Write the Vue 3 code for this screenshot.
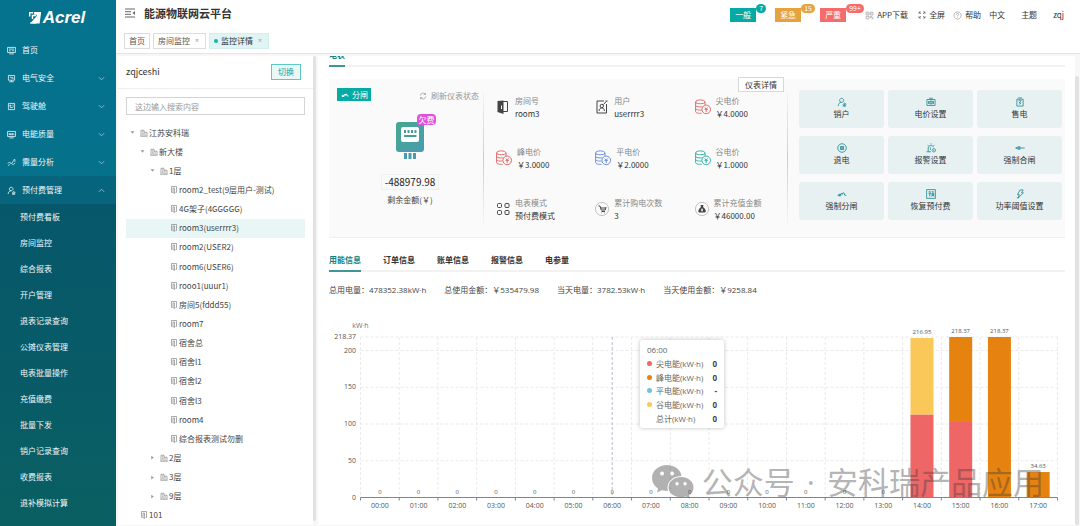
<script setup>
const icons = {
  monitor: 'M1 2.500h14v9H1zM4 14h8M3.500 5.500h9M3.500 8.500h3M9 8.500h3.500',
  plug: 'M2.500 2.500h11v8.500h-11zM8 11v2.500M4 13.800h8M5 5.500h2.500v2.500M10 5v3h1.500',
  gauge: 'M2.500 2.500h11v11h-11zM5 5.500h2v2H5zM5 10.500l2-1 2 1 2.500-3M9.500 5.500h2',
  quality: 'M1 2.500h14v9H1zM4 14h8M4 9V6l2 3V6M8.500 6h1v3h-1zM12 6v3',
  trend: 'M1.500 10l3-3 3 3.500 4-5M2 13.500l3-2M9 10.500l2 1.500 3.500-3.500M10.500 4.500l3.500-2v4',
  user: 'M7.500 8.500a3.200 3.200 0 1 0-.1 0M2 14.500c0-3.500 2-6 5-6M12 10a2 2 0 1 0 .1 0M10.500 13.500l3-3M9 14.500h5.500',
  building: 'M2 14.500V2.500h6v12M8 6.500h6v8M1 14.500h14M4 5.500h2M4 8.500h2M4 11.500h2M10.500 9.500h1.500M10.500 12h1.500',
  door: 'M5 13H3V1h10v12h-2M6 4h3v11l-3-2z',
  qr: 'M2 2h5v5H2zM9.500 2h4.500v5H9.500zM2 9.500h5v4.500H2zM9.500 9.500h2v2h-2zM12 14h2v-4M4 4.500h1M11.500 4.500h1',
  expand: 'M2 6V2h4M14 6V2h-4M2 10v4h4M14 10v4h-4M2 2l4 4M14 2l-4 4M2 14l4-4M14 14l-4-4',
  help: 'M8 1.500a6.500 6.500 0 1 0 .1 0M6 6.500c0-3 4-3 4-.5 0 1.500-2 1.500-2 3.500M8 11v1.200',
  price: 'M1.500 4h13v9.500h-13zM5 2h6M6 6.500h4v4.500H6zM8 6.500v4.500M4 6.500v4.500M12 6.500v4.500',
  sell: 'M3 3.500h10v11H3zM5 1.500h6M5.500 6h5M9 7l-2.500 2.500h3L7.500 12',
  refund: 'M8 1.200a6.800 6.800 0 1 0 .1 0M5.500 5.500h5v5h-5zM7 7h2v2H7z',
  alarm: 'M1 14h7M3.500 14V8c0-5 8-5 8.500-1M8 .5v2M2.500 3l1.500 1.500M13.500 3L12 4.500M7 7v4M12.500 9a2.700 2.700 0 1 0 .1 0M12.500 10.500v2',
  on: 'M.5 8h15M4 6l-2 2 2 2M5 6h3v4H5z',
  off: 'M1 10h4M5 10l2-3 2 2M7 8l4-2 1.500 4H15M3 8.500h3V11H3z',
  prepaid: 'M1 1h14v14H1zM4 4.500h3.500L5.500 6.500M4 7.500h4M6 7.500V12M9 4.500h3.500M9.500 6.500h3v4h-3zM9.500 8.500h3M10 10.500L8.500 12M12 10.500l1 1.500',
  bolt: 'M8 1.500h5L10.500 6h3L5 14.500 7 9H4zM6.500 14H3',
}

const menu = [
  { label: '首页', icon: 'monitor' },
  { label: '电气安全', icon: 'plug', sub: true },
  { label: '驾驶舱', icon: 'gauge', sub: true },
  { label: '电能质量', icon: 'quality', sub: true },
  { label: '需量分析', icon: 'trend', sub: true },
  { label: '预付费管理', icon: 'user', sub: true, open: true },
]
const submenu = ['预付费看板', '房间监控', '综合报表', '开户管理', '退表记录查询', '公摊仪表管理', '电表批量操作', '充值缴费', '批量下发', '销户记录查询', '收费报表', '退补模拟计算']

const alerts = [
  { label: '一般', count: '7', kind: 'normal' },
  { label: '紧急', count: '15', kind: 'urgent' },
  { label: '严重', count: '99+', kind: 'severe' },
]

const room = (label) => ({ label, level: 'l3', icon: 'door' })
const tree = [
  { label: '江苏安科瑞', level: 'l0', icon: 'building', arrow: 'open' },
  { label: '新大楼', level: 'l1', icon: 'building', arrow: 'open' },
  { label: '1层', level: 'l2', icon: 'building', arrow: 'open' },
  room('room2_test(9层用户-测试)'),
  room('4G架子(4GGGGG)'),
  { ...room('room3(userrrr3)'), active: true },
  room('room2(USER2)'),
  room('room6(USER6)'),
  room('rooo1(uuur1)'),
  room('房间5(fddd55)'),
  room('room7'),
  room('宿舍总'),
  room('宿舍l1'),
  room('宿舍l2'),
  room('宿舍l3'),
  room('room4'),
  room('综合报表测试勿删'),
  { label: '2层', level: 'l2', icon: 'building', arrow: 'closed' },
  { label: '3层', level: 'l2', icon: 'building', arrow: 'closed' },
  { label: '9层', level: 'l2', icon: 'building', arrow: 'closed' },
  { label: '101', level: 'l0', icon: 'door' },
]

const infos = [
  { label: '房间号', value: 'room3', kind: 'room' },
  { label: '用户', value: 'userrrr3', kind: 'person' },
  { label: '尖电价', value: '￥4.0000', kind: 'coin', tone: 'red' },
  { label: '峰电价', value: '￥3.0000', kind: 'coin', tone: 'red' },
  { label: '平电价', value: '￥2.0000', kind: 'coin', tone: 'blue' },
  { label: '谷电价', value: '￥1.0000', kind: 'coin', tone: 'teal' },
  { label: '电表模式', value: '预付费模式', kind: 'mode' },
  { label: '累计购电次数', value: '3', kind: 'cart' },
  { label: '累计充值金额', value: '￥46000.00', kind: 'bag' },
]

const actions = [
  ['销户', 'user'], ['电价设置', 'price'], ['售电', 'sell'],
  ['退电', 'refund'], ['报警设置', 'alarm'], ['强制合闸', 'on'],
  ['强制分闸', 'off'], ['恢复预付费', 'prepaid'], ['功率阈值设置', 'bolt'],
]

const tabs = ['用能信息', '订单信息', '账单信息', '报警信息', '电参量']
const stats = [
  ['总用电量：', '478352.38kW·h'],
  ['总使用金额：', '￥535479.98'],
  ['当天电量：', '3782.53kW·h'],
  ['当天使用金额：', '￥9258.84'],
]

const plot = { left: 31.5, right: 728.5, top: 39, bottom: 199.5 }
const maxValue = 218.37
const step = (plot.right - plot.left) / 18
const yOf = (v) => plot.bottom - (v / maxValue) * (plot.bottom - plot.top)
const ticks = [0, 50, 100, 150, 200, maxValue]
const hours = Array.from({ length: 18 }, (_, i) => ({
  label: String(i).padStart(2, '0') + ':00',
  x: plot.left + step * (i + 0.5),
  edge: plot.left + step * i,
  parts: [],
  total: 0,
}))
const fill = (i, parts) => {
  let base = 0
  hours[i].parts = parts.map(([value, color]) => {
    const part = { y: yOf(base + value), h: yOf(base) - yOf(base + value), color }
    base += value
    return part
  })
  hours[i].total = Number(base.toFixed(2))
}
fill(14, [[113, '#ee6666'], [103.95, '#fac858']])
fill(15, [[104, '#ee6666'], [114.37, '#e68310']])
fill(16, [[218.37, '#e68310']])
fill(17, [[34.63, '#e68310']])

const tooltip = [
  ['尖电能(kW·h)', '0', 'red'],
  ['峰电能(kW·h)', '0', 'orange'],
  ['平电能(kW·h)', '-', 'blue'],
  ['谷电能(kW·h)', '0', 'yellow'],
  ['总计(kW·h)', '0', 'none'],
]
</script>

<template>
  <div class="app">
    <aside class="side">
      <div class="logo">
        <svg viewBox="0 0 26 26" class="logo-mark"><path d="M0 0h9v3H3v7H0zM11 0h15v3H11zM26 3l-3 22H3v-3h11l3-16h-6V3z" /><path d="M6 6h9v3H9v6H6zM2 25L14 12l5-5-3 18z" /></svg>
        <strong>Acrel</strong>
      </div>
      <nav>
        <a v-for="m in menu" :key="m.label" href="#" class="menu" :class="{ open: m.open }">
          <svg viewBox="0 0 16 16" class="ico"><path :d="icons[m.icon]" /></svg>
          <span>{{ m.label }}</span>
          <svg v-if="m.sub" viewBox="0 0 8 8" class="chev"><path :d="m.open ? 'M1 5.500l3-3 3 3' : 'M1 2.500l3 3 3-3'" /></svg>
        </a>
        <div class="submenu">
          <a v-for="s in submenu" :key="s" href="#">{{ s }}</a>
        </div>
      </nav>
    </aside>

    <div class="page">
      <header class="head">
        <div class="head-top">
          <button class="fold" aria-label="收起菜单">
            <svg viewBox="0 0 12 12"><path d="M1 2h10M1 4.700h6M1 7.300h6M1 10h10" /><path class="solid" d="M11 4v4L8.500 6z" /></svg>
          </button>
          <h1>能源物联网云平台</h1>
          <div class="tools">
            <button v-for="a in alerts" :key="a.label" class="alert" :class="a.kind">{{ a.label }}<i>{{ a.count }}</i></button>
            <a href="#" class="t-app"><svg viewBox="0 0 16 16" class="ico"><path :d="icons.qr" /></svg>APP下载</a>
            <a href="#" class="t-full"><svg viewBox="0 0 16 16" class="ico dark"><path :d="icons.expand" /></svg>全屏</a>
            <a href="#" class="t-help"><svg viewBox="0 0 16 16" class="ico"><path :d="icons.help" /></svg>帮助</a>
            <a href="#" class="t-lang">中文</a>
            <a href="#" class="t-theme">主题</a>
            <a href="#">zqj</a>
          </div>
        </div>
        <div class="crumbs">
          <a href="#">首页</a>
          <a href="#">房间监控<span class="x">×</span></a>
          <a href="#" class="on"><i></i>监控详情<span class="x">×</span></a>
        </div>
      </header>

      <div class="body">
        <section class="tree-panel">
          <div class="tree-head"><span>zqjceshi</span><button>切换</button></div>
          <input type="text" placeholder="这边输入搜索内容" aria-label="这边输入搜索内容">
          <ul class="tree">
            <li v-for="n in tree" :key="n.label" :class="[n.level, { active: n.active }]">
              <svg viewBox="0 0 8 8" class="tri"><path v-if="n.arrow" :d="n.arrow === 'open' ? 'M1 2h6L4 6z' : 'M2 1v6L6 4z'" /></svg>
              <svg viewBox="0 0 16 16" class="ico"><path :d="icons[n.icon]" /></svg>
              <span>{{ n.label }}</span>
            </li>
          </ul>
        </section>
        <div class="bar tree-bar"></div>

        <main class="main">
          <div class="strip clipped"><button class="on">电表</button></div>

          <section class="card">
            <button class="detail">仪表详情</button>
            <div class="meter">
              <div class="meter-top">
                <span class="tag"><svg viewBox="0 0 16 16" class="ico"><path :d="icons.off" /></svg>分闸</span>
                <button class="refresh"><svg viewBox="0 0 16 16" class="ico"><path d="M2.500 7a5.500 5.500 0 0 1 10-2.500M13.500 9a5.500 5.500 0 0 1-10 2.500M13 1.500v3.500H9.500M3 14.500V11h3.500" /></svg>刷新仪表状态</button>
              </div>
              <div class="device">
                <svg viewBox="0 0 28 38">
                  <defs><linearGradient id="mg" x1="0" y1="0" x2="1" y2="1"><stop offset="0" stop-color="#45a88f" /><stop offset="1" stop-color="#4a9bb0" /></linearGradient></defs>
                  <rect x="0" y="1" width="28" height="30" rx="3" fill="url(#mg)" />
                  <rect x="5" y="6" width="18" height="15" rx="2" fill="#fff" />
                  <path d="M8 9h2v3H8zM11.500 9h2v3h-2zM15 9h2v3h-2zM18.500 9h2v3h-2zM8 14h12.500v2H8z" fill="#45a08f" />
                  <path d="M8 32h3v6H8zM12.500 32h3v6h-3zM17 32h3v6h-3z" fill="#4a9bab" />
                </svg>
                <span class="owe">欠费</span>
              </div>
              <div class="money">-488979.98</div>
              <div class="money-label">剩余金额(￥)</div>
            </div>

            <div class="infos">
              <div v-for="f in infos" :key="f.label" class="info" :class="f.kind">
                <svg viewBox="0 0 16 16" class="pic" :class="f.tone">
                  <template v-if="f.kind === 'coin'">
                    <path d="M.6 3c0-2.800 9.400-2.800 9.400 0v3M.6 3c0 2.300 9.400 2.300 9.400 0M.6 3v9.500c0 1.500 3 2 6 1.800M.6 6.200c0 1.600 4 2 7 1.500M.6 9.400c0 1.300 3 1.900 6 1.600" />
                    <circle cx="11.200" cy="10.400" r="4.300" /><path d="M9.800 8.500l1.400 1.700 1.400-1.700M9.600 10.400h3.200M11.200 10.200v3" />
                  </template>
                  <template v-else-if="f.kind === 'room'">
                    <path d="M6 2.500h5.500v10H7" /><path class="solid" d="M1.500 2l6-.5v13.500l-6-2z" /><path class="cut" d="M5.500 6.500v3.500" />
                  </template>
                  <template v-else-if="f.kind === 'person'">
                    <path d="M2 2h7M11.500 5v9H2V2M8.500 5.500l3.500-4M11 1.500l1 1" /><circle cx="6.800" cy="7" r="1.700" /><path d="M4 12c0-4 5.500-4 5.500 0" />
                  </template>
                  <template v-else-if="f.kind === 'mode'">
                    <rect x="1.500" y="2.500" width="4" height="4" rx="1" /><rect x="9" y="2.500" width="4" height="4" rx="1" />
                    <rect x="1.500" y="9.500" width="4" height="4" rx="1" /><rect x="9" y="9.500" width="4" height="4" rx="1" />
                  </template>
                  <template v-else>
                    <circle class="ring" cx="7" cy="8" r="6.600" />
                    <path v-if="f.kind === 'cart'" d="M3.500 5H5l1.200 4h4L11 6M6.500 10.500h3.500M6.500 12h.5M9.500 12h.5M6 7h4.500" />
                    <path v-else class="solid" d="M5.500 4h3L8 6c4 3 3 5.500 1.500 5.500h-5C3 11.500 2.500 9 6 6z" />
                    <path v-if="f.kind === 'bag'" class="cut" d="M7 7.500v3M6 9h2" />
                  </template>
                </svg>
                <div><span>{{ f.label }}</span><b>{{ f.value }}</b></div>
              </div>
            </div>

            <div class="actions">
              <button v-for="a in actions" :key="a[0]"><svg viewBox="0 0 16 16" class="ico"><path :d="icons[a[1]]" /></svg>{{ a[0] }}</button>
            </div>
          </section>

          <div class="strip tabs"><button v-for="(t, i) in tabs" :key="t" :class="{ on: i === 0 }">{{ t }}</button></div>
          <div class="stats"><span v-for="s in stats" :key="s[0]">{{ s[0] }}<b>{{ s[1] }}</b></span></div>

          <div class="chart">
            <svg viewBox="0 0 736 222">
              <g class="grid">
                <line v-for="t in ticks.slice(1)" :key="t" :x1="plot.left" :x2="plot.right" :y1="yOf(t)" :y2="yOf(t)" />
                <line v-for="h in hours" :key="h.label" :x1="h.edge" :x2="h.edge" :y1="plot.top" :y2="plot.bottom" />
                <line :x1="plot.right" :x2="plot.right" :y1="plot.top" :y2="plot.bottom" />
              </g>
              <line class="pointer" :x1="hours[6].x" :x2="hours[6].x" :y1="plot.top" :y2="plot.bottom" />
              <text class="unit" :x="plot.left" y="30">kW·h</text>
              <text v-for="t in ticks" :key="t" class="tick" x="27" :y="yOf(t) + 2">{{ t }}</text>
              <g v-for="h in hours" :key="h.label">
                <rect v-for="p in h.parts" :key="p.y" :x="h.x - 11.500" :y="p.y" width="23" :height="p.h" :fill="p.color" />
                <text class="val" :x="h.x" :y="yOf(h.total) - 4">{{ h.total }}</text>
                <text class="hour" :x="h.x" y="210">{{ h.label }}</text>
                <line class="axis" :x1="h.edge" :x2="h.edge" :y1="plot.bottom" :y2="plot.bottom + 3" />
              </g>
              <line class="axis" :x1="plot.right" :x2="plot.right" :y1="plot.bottom" :y2="plot.bottom + 3" />
              <line class="axis" :x1="plot.left" :x2="plot.right" :y1="plot.bottom" :y2="plot.bottom" />
            </svg>

            <div class="tip">
              <p>06:00</p>
              <div v-for="r in tooltip" :key="r[0]"><i :class="r[2]"></i><span>{{ r[0] }}</span><b>{{ r[1] }}</b></div>
            </div>

            <div class="mark">
              <svg viewBox="0 0 42 34">
                <path fill-rule="evenodd" d="M15 0c8 0 14 5 14.500 11C21 11 15 16.500 15.500 23.500c.1 1 .2 1.800.5 2.500-2 0-4-.2-6-.8L5 27.500l1-4C2.500 21 0 17.500 0 13 0 5.500 7 0 15 0zM10 6.500a2 2 0 1 0 .1 0zM20 6.500a2 2 0 1 0 .1 0z" />
                <path fill-rule="evenodd" d="M29 12c7 0 12.500 4.500 12.500 10.500 0 3.500-2 6-4.500 8l1 3-4-2c-1.500.5-3 .8-5 .8-7 0-12.500-4.300-12.500-10C16.500 16.500 22 12 29 12zM25 17a1.700 1.700 0 1 0 .1 0zM33 17a1.700 1.700 0 1 0 .1 0z" />
              </svg>
              <span>公众号</span><span>·</span><span>安科瑞产品应用</span>
            </div>
          </div>
        </main>
        <div class="bar main-bar"></div>
      </div>
    </div>
  </div>
</template>

<style>
html, body, #app { height: 100%; }
body { margin: 0; }
</style>

<style scoped>
* { box-sizing: border-box; }
.app {
  display: flex;
  height: 100%;
  min-height: 526px;
  font: 8px/16px "Noto Sans CJK SC", sans-serif;
  color: #444;
  background: #fff;
  overflow: hidden;
}
button { font: inherit; color: inherit; background: none; border: 0; padding: 0; margin: 0; cursor: pointer; }
a { color: inherit; text-decoration: none; }
i { font-style: normal; }
svg { display: block; }
.ico { width: 9px; height: 9px; flex: none; fill: none; stroke: currentColor; stroke-width: 1.4; }

.side { width: 116px; flex: none; color: #f0f8fa; background: linear-gradient(#05738f 0, #05718b 176px, #0a5f62 100%); }
.logo { height: 36px; display: flex; align-items: center; justify-content: center; gap: 1px; padding-right: 2px; }
.logo strong { font: italic 900 17px/34px "Liberation Sans", Arial, sans-serif; color: #fff; }
.logo-mark { width: 12px; height: 12px; fill: #fff; margin-right: 1px; }
.menu { display: flex; align-items: center; height: 28px; padding: 0 11px 0 7px; }
.menu span { margin-left: 6px; flex: 1; }
.menu .chev { width: 7px; height: 7px; fill: none; stroke: #9cc6d0; }
.menu.open { background: #06657d; }
.submenu { background: linear-gradient(#06576b, #0a5f62); padding-bottom: 10px; }
.submenu a { display: block; height: 26px; line-height: 26px; padding-left: 20px; }

.page { flex: 1; min-width: 0; display: flex; flex-direction: column; }
.head { height: 54px; border-bottom: 1px solid #e4e4e4; flex: none; }
.head-top { height: 33px; display: flex; align-items: flex-start; padding: 5px 16px 0 8px; }
.fold { margin: 2px 0 0; }
.fold svg { width: 12px; height: 12px; fill: none; stroke: #666; stroke-width: 1; }
.fold .solid { fill: #666; stroke: none; }
h1 { margin: 0 auto 0 8px; font-size: 11px; line-height: 16px; font-weight: 600; color: #333; }
.tools { display: flex; align-items: center; padding-top: 3px; line-height: 14px; color: #333; }
.tools a { display: flex; align-items: center; gap: 3px; }
.tools .ico { stroke: #888; stroke-width: 1; }
.tools .ico.dark { stroke: #333; width: 8px; height: 8px; }
.alert { position: relative; width: 26px; height: 14px; color: #fff; margin-right: 19px; }
.alert i { position: absolute; left: 26px; top: -4px; height: 9px; min-width: 10px; padding: 0 3px; border-radius: 5px; font-size: 7px; line-height: 9px; background: inherit; }
.normal { background: #05aaa4; }
.urgent { background: #e6a23c; }
.severe { background: #f56c6c; }
.t-app { margin-right: 10px; }
.t-full, .t-help { margin-right: 8px; }
.t-lang, .t-theme { margin-right: 16px; }
.crumbs { display: flex; gap: 3px; padding-left: 8px; }
.crumbs a { display: flex; align-items: center; height: 16px; padding: 0 4px; border: 1px solid #dcdcdc; color: #555; }
.crumbs .on { background: #e0f5f3; border-color: #d5efed; color: #333; }
.crumbs .on i { width: 4px; height: 4px; border-radius: 50%; background: #13b5ac; margin-right: 3px; }
.crumbs .x { color: #999; margin: 0 2px 0 5px; font-family: "Open Sans", sans-serif; font-size: 7px; }

.body { flex: 1; min-height: 0; display: flex; padding: 2px 0 1px 2px; background: #f7f7f7; }
.tree-panel { width: 195px; flex: none; background: #fff; display: flex; flex-direction: column; }
.tree-head { display: flex; align-items: center; justify-content: space-between; height: 33px; padding: 0 12px 0 8px; border-bottom: 1px solid #eee; flex: none; }
.tree-head span { font-size: 9px; color: #333; }
.tree-head button { width: 30px; height: 16px; line-height: 14px; border: 1px solid #5cc9c4; background: #e9f7f6; color: #0fa59f; }
.tree-panel input { margin: 8px 8px 0; height: 18px; padding: 0 8px; border: 1px solid #d4d4d4; font: inherit; outline: none; min-width: 0; flex: none; }
.tree-panel input::placeholder { color: #999; opacity: 1; }
.tree { list-style: none; margin: 8px 8px 0; padding: 0; flex: 1; display: flex; flex-direction: column; }
.tree li { flex: 1; display: flex; align-items: center; white-space: nowrap; }
.tree .tri { width: 5px; height: 5px; fill: #999; margin-right: 5px; flex: none; }
.tree .ico { width: 8px; height: 8px; stroke: #888; margin-right: 1px; }
.tree .l0 { padding-left: 4px; }
.tree .l1 { padding-left: 14px; }
.tree .l2 { padding-left: 24px; }
.tree .l3 { padding-left: 34px; }
.tree .active { background: #e8f6f6; }
.bar { flex: none; background: #e2e2e2; border-radius: 2px; }
.tree-bar { width: 3px; margin-bottom: 4px; }
.main-bar { width: 4px; margin: 20px 1px 0 0; }

.main { flex: 1; min-width: 0; background: #fff; margin-left: 2px; padding: 0 10px 0 11px; }
.strip { display: flex; align-items: flex-end; border-bottom: 2px solid #f2f2f2; }
.strip button { padding-bottom: 2px; border-bottom: 2px solid transparent; margin-bottom: -2px; font-weight: 600; color: #333; line-height: 16px; flex: none; }
.strip .on { color: #16807f; border-color: #3f9694; }
.clipped { height: 11px; overflow: clip; overflow-clip-margin: border-box; }
.tabs { height: 24px; gap: 22px; margin-top: 10px; }

.card { position: relative; display: grid; grid-template-columns: 155fr 304fr 274fr; height: 159px; margin-top: 12px; padding-right: 3px; background: #fafafa; border-bottom: 1px solid #f0f0f0; }
.detail { position: absolute; right: 281px; top: -2px; width: 46px; height: 15px; line-height: 13px; background: #fff; border: 1px solid #d8d8d8; color: #333; }
.meter { position: relative; padding: 9px 5px 0 12px; display: flex; flex-direction: column; align-items: center; }
.meter::after, .infos::after { content: ""; position: absolute; right: 0; top: 11px; width: 1px; height: 135px; background: linear-gradient(#f6f6f6, #ccc 50%, #f6f6f6); }
.meter-top { align-self: stretch; display: flex; justify-content: space-between; margin-left: -4px; }
.tag { display: flex; align-items: center; gap: 2px; height: 13px; padding: 0 3px; background: #05aaa4; color: #fff; }
.tag .ico, .refresh .ico { width: 10px; height: 8px; }
.tag .ico { stroke-width: 2; }
.refresh { display: flex; align-items: center; gap: 3px; color: #999; line-height: 14px; height: 16px; }
.device { position: relative; margin-top: 17px; }
.device svg { width: 28px; height: 38px; }
.owe { position: absolute; left: 21px; top: -7px; width: 19px; height: 11px; line-height: 11px; text-align: center; color: #fff; background: #e052dc; border-radius: 4px 4px 4px 0; }
.money { margin-top: 15px; padding: 0 3px; font-size: 10px; line-height: 14px; border: 1px solid #f0f0f0; color: #222; }
.money-label { margin-top: 2px; color: #444; }
.infos { position: relative; display: grid; grid-template-columns: 34% 34% 32%; grid-auto-rows: 51px; padding: 2px 0 0 12px; }
.info { display: flex; align-items: center; gap: 3px; white-space: nowrap; }
.info > div { line-height: 13px; }
.info.coin > div { padding-left: 2px; }
.info span, .info b { display: block; }
.info span { color: #888; }
.info b { font-weight: 400; color: #333; }
.pic { width: 16px; height: 16px; fill: none; stroke: #444; stroke-width: 1; flex: none; }
.pic .solid { fill: #444; stroke: none; }
.pic .cut { stroke: #fff; }
.pic .ring { stroke: #aaa; stroke-width: 0.7; }
.pic.red { stroke: #e06c6c; }
.pic.blue { stroke: #6d8fe0; }
.pic.teal { stroke: #38b3a8; }
.actions { display: grid; grid-template-columns: repeat(3, 1fr); grid-auto-rows: 38px; gap: 8px 4px; padding: 11px 0 0 11px; }
.actions button { display: flex; flex-direction: column; align-items: center; justify-content: center; background: #e7f1f2; border-radius: 3px; color: #333; line-height: 14px; }
.actions .ico { color: #2a9097; width: 10px; height: 10px; }

.stats { display: flex; gap: 18px; margin-top: 10px; white-space: nowrap; color: #444; }
.stats b { font-weight: 400; }

.chart { position: relative; }
.chart > svg { width: 100%; }
.chart, .stats { font-family: "Open Sans", "Noto Sans CJK SC", sans-serif; }
.grid line { stroke: #eaeaea; stroke-dasharray: 3 2; }
.pointer { stroke: #b9bccb; stroke-dasharray: 3 2; }
.axis { stroke: #7d82a0; }
.chart text { font-size: 7px; fill: #555; text-anchor: middle; }
.chart .tick { text-anchor: end; }
.chart .unit { fill: #6e7079; }
.chart .val { font-size: 6px; }
.tip { position: absolute; left: 311px; top: 42px; width: 84px; height: 88px; display: flex; flex-direction: column; padding: 3px 7px; background: #fff; border-radius: 2px; box-shadow: 0 0 4px rgba(0, 0, 0, 0.25); color: #666; line-height: 13px; }
.tip p { margin: 0; flex: 1; }
.tip div { display: flex; align-items: center; flex: 1; }
.tip i { width: 5px; height: 5px; border-radius: 50%; margin-right: 4px; }
.tip span { flex: 1; white-space: nowrap; }
.tip b { color: #444; }
.tip .red { background: #ee6666; }
.tip .orange { background: #e68310; }
.tip .blue { background: #73c0de; }
.tip .yellow { background: #fac858; }
.mark { position: absolute; right: 21px; top: 162px; display: flex; align-items: center; font-size: 31px; line-height: 44px; color: rgba(60, 60, 60, 0.4); white-space: nowrap; pointer-events: none; gap: 12px; }
.mark svg { width: 42px; height: 34px; fill: currentColor; margin-right: -4px; }
</style>
